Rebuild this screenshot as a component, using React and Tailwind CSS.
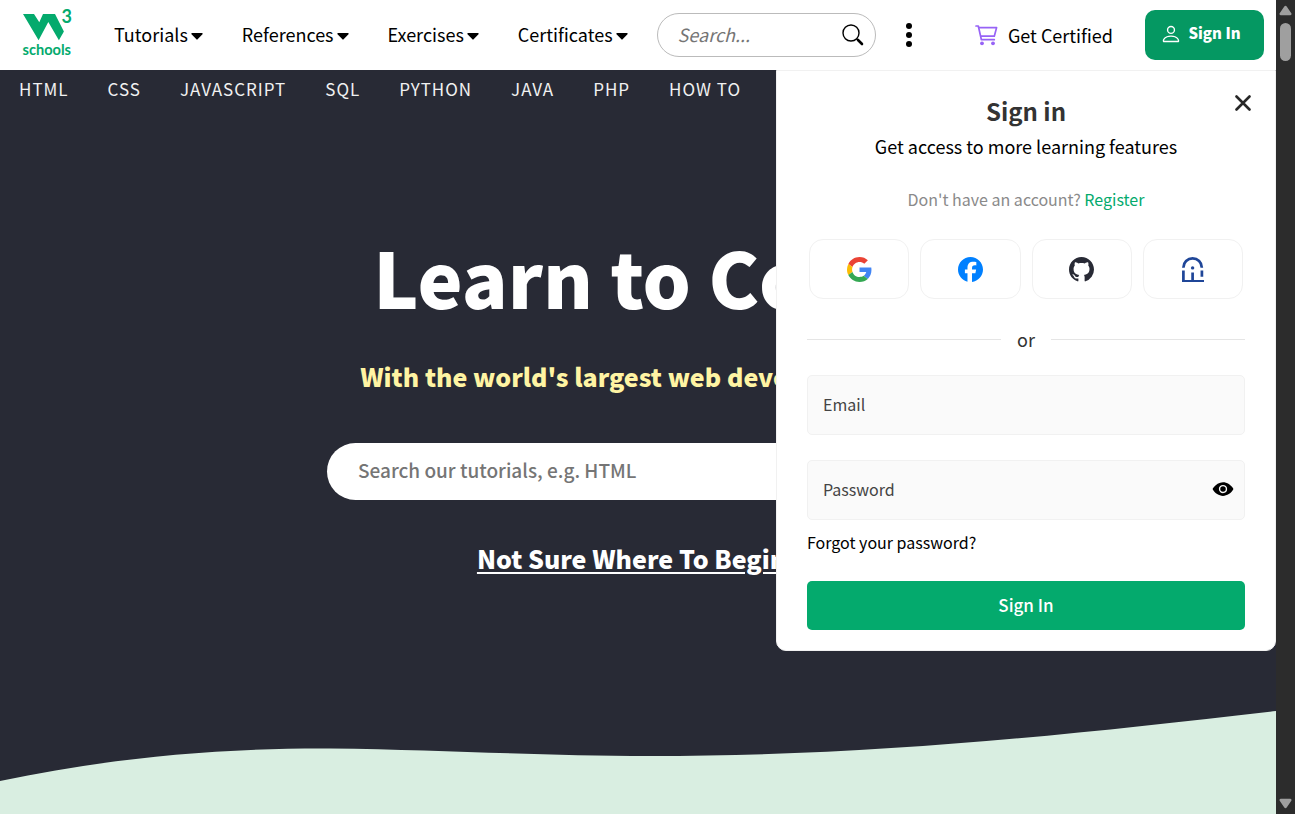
import React from "react";
import { FaFacebook } from "react-icons/fa6";
import { BsGithub, BsPerson } from "react-icons/bs";
import { IoEye } from "react-icons/io5";

const MENUS = ["Tutorials", "References", "Exercises", "Certificates"];
const TOPICS = ["HTML", "CSS", "JAVASCRIPT", "SQL", "PYTHON", "JAVA", "PHP", "HOW TO"];

function Logo() {
  return (
    <a href="#home" aria-label="W3Schools home" className="block shrink-0">
      <svg width="54" height="62" viewBox="0 -6 54 62" className="block fill-[#04aa6d]">
        <path d="M2 4h11l5.300 8.300L22 4h12l8.900 17.400-5 8.900-10.600-18.300-9.700 18.300z" />
        <text x="40.5" y="13" fontSize="18" fontWeight="700" fontFamily="Lato, sans-serif">3</text>
        <text x="1.5" y="45" fontSize="14.600" fontWeight="700" fontFamily="Lato, sans-serif">schools</text>
      </svg>
    </a>
  );
}

function Caret() {
  return (
    <svg width="12" height="7" viewBox="0 0 12 7" className="mt-1 block fill-black" aria-hidden="true">
      <path d="M1 0h10a.7.7 0 0 1 .5 1.2L6.6 6.3a.8.8 0 0 1-1.2 0L.5 1.2A.7.7 0 0 1 1 0z" />
    </svg>
  );
}

function SearchIcon() {
  return (
    <svg width="22" height="22" viewBox="0 0 22 22" fill="none" className="block stroke-black" aria-hidden="true">
      <circle cx="9" cy="9" r="8" strokeWidth="1.4" />
      <path d="M14.6 14.8l1.6 1.6" strokeWidth="1.4" />
      <path d="M16 16l4 4" strokeWidth="2.6" strokeLinecap="round" />
    </svg>
  );
}

function CartIcon() {
  return (
    <svg width="23" height="21" viewBox="0 0 23 21" fill="none" strokeWidth="1.7" strokeLinecap="round" strokeLinejoin="round" className="block stroke-[#9763f6]" aria-hidden="true">
      <path d="M1 1h2.300l3.100 13.700H19.300" />
      <path d="M3.700 2.600H21.600L19.300 11.200H5.800" />
      <circle cx="7" cy="18.300" r="1.900" className="fill-[#9763f6] stroke-none" />
      <circle cx="18" cy="18.300" r="1.900" className="fill-[#9763f6] stroke-none" />
    </svg>
  );
}

function GoogleIcon() {
  return (
    <svg width="25" height="25" viewBox="0 0 48 48" className="block" aria-hidden="true">
      <path fill="#EA4335" d="M24 9.5c3.54 0 6.71 1.22 9.21 3.6l6.85-6.85C35.9 2.38 30.47 0 24 0 14.62 0 6.51 5.38 2.56 13.22l7.98 6.19C12.43 13.72 17.74 9.5 24 9.5z" />
      <path fill="#4285F4" d="M46.98 24.55c0-1.57-.15-3.09-.38-4.55H24v9.02h12.94c-.58 2.96-2.26 5.48-4.78 7.18l7.73 6c4.51-4.18 7.09-10.36 7.09-17.65z" />
      <path fill="#FBBC05" d="M10.53 28.59c-.48-1.45-.76-2.99-.76-4.59s.27-3.14.76-4.59l-7.98-6.19C.92 16.46 0 20.12 0 24c0 3.88.92 7.54 2.56 10.78l7.97-6.19z" />
      <path fill="#34A853" d="M24 48c6.48 0 11.93-2.13 15.89-5.81l-7.73-6c-2.15 1.45-4.92 2.3-8.16 2.3-6.26 0-11.57-4.22-13.47-9.91l-7.98 6.19C6.51 42.62 14.62 48 24 48z" />
    </svg>
  );
}

function ArchIcon() {
  return (
    <svg width="22" height="25" viewBox="0 0 22 25" fill="none" className="block stroke-[#1f4698]" aria-hidden="true">
      <path d="M1.400 10.800V10.400a9.200 9 0 0 1 18.400 0v.4" strokeWidth="2.700" />
      <path d="M1.400 13.500V25M10.600 15.500V24M19.900 13.500v6.300" strokeWidth="2.700" />
      <path d="M0 24h22" strokeWidth="2" />
      <circle cx="10.600" cy="10.900" r="1.700" className="fill-[#1f4698] stroke-none" />
    </svg>
  );
}

function Header() {
  return (
    <header className="flex h-[70px] shrink-0 items-center bg-white pl-[21px] pr-3">
      <Logo />
      <nav className="ml-[39px] flex items-center gap-[39px] pb-0.5">
        {MENUS.map((m) => (
          <a key={m} href={"#" + m.toLowerCase()} className="flex items-center gap-[3px] text-[18px] leading-6 text-black">
            {m}
            <Caret />
          </a>
        ))}
      </nav>
      <div className="ml-[29px] flex h-11 w-[219px] shrink-0 items-center rounded-full border border-[#bbb] pl-5 pr-[11px]">
        <input
          type="text"
          aria-label="Search"
          placeholder="Search..."
          className="min-w-0 flex-1 bg-transparent pb-0.5 text-[18px] leading-6 outline-none placeholder:italic placeholder:text-[#757575]"
        />
        <button type="button" aria-label="Submit search">
          <SearchIcon />
        </button>
      </div>
      <button type="button" aria-label="More" className="ml-[30px] flex flex-col gap-[3px]">
        <span className="block size-1.5 rounded-full bg-black" />
        <span className="block size-1.5 rounded-full bg-black" />
        <span className="block size-1.5 rounded-full bg-black" />
      </button>
      <a href="#certified" className="ml-auto flex items-center gap-2.5 whitespace-nowrap text-[18px] leading-6 text-black">
        <CartIcon />
        Get Certified
      </a>
      <button
        type="button"
        className="ml-8 flex h-[50px] w-[119px] shrink-0 items-center justify-center gap-1.5 rounded-[10px] bg-[#059862] pr-2 pb-[3px] text-[15px] font-black text-white"
      >
        <BsPerson className="size-[22px]" />
        Sign In
      </button>
    </header>
  );
}

function Hero() {
  return (
    <main className="flex min-h-0 flex-1 flex-col bg-[#282a35]">
      <nav className="flex h-10 items-center gap-[39px] pb-0.5 pl-[19px]">
        {TOPICS.map((t) => (
          <a key={t} href={"#" + t.toLowerCase()} className="whitespace-nowrap text-[17px] leading-6 tracking-[1px] text-[#f1f1f1]">
            {t}
          </a>
        ))}
      </nav>
      <section className="flex flex-1 flex-col items-center pt-[110px] text-center">
        <h1 className="text-[76px] leading-[112px] font-black text-white">Learn to Code</h1>
        <p className="mt-[26px] text-[25px] leading-9 font-black text-[#fff4a3]">With the world's largest web developer site.</p>
        <input
          type="text"
          aria-label="Search our tutorials"
          placeholder="Search our tutorials, e.g. HTML"
          className="mt-[49px] h-[57px] w-[622px] max-w-full rounded-full bg-white px-[31px] pb-1 text-[19px] font-medium outline-none placeholder:text-[#757575]"
        />
        <a href="#start" className="mt-10 text-[25px] leading-9 font-black text-white underline decoration-2 underline-offset-3">
          Not Sure Where To Begin?
        </a>
      </section>
      <svg viewBox="0 0 1276 104" preserveAspectRatio="none" className="block h-[104px] w-full shrink-0 fill-[#d9eee1]" aria-hidden="true">
        <path d="M0 71C110 48 215 38 330 38.500C450 40 540 46 650 46C870 46 1060 26 1276 1V104H0z" />
      </svg>
    </main>
  );
}

function SignInPanel() {
  const social = "flex h-[60px] items-center justify-center rounded-[14px] border border-[#f1f1f1] bg-white";
  const field =
    "h-[60px] w-full rounded-[5px] border border-[#f1f1f1] bg-[#fafafa] px-[15px] pb-0.5 text-[16px] text-black outline-none placeholder:text-[#444]";
  return (
    <section
      aria-label="Sign in"
      className="absolute top-[70px] right-0 w-[500px] rounded-b-[10px] border border-[#f1f1f1] bg-white px-[30px] pt-6 pb-5 text-center"
    >
      <button type="button" aria-label="Close" className="absolute top-6 right-6 text-[#282828]">
        <svg width="16" height="16" viewBox="0 0 16 16" fill="none" stroke="currentColor" strokeWidth="2.6" strokeLinecap="round" className="block">
          <path d="M1.500 1.500l13 13M14.500 1.500l-13 13" />
        </svg>
      </button>
      <h2 className="text-[24px] leading-8 font-bold text-[#333]">Sign in</h2>
      <p className="mt-px text-[18px] leading-9 text-black">Get access to more learning features</p>
      <p className="mt-[23px] text-[16px] leading-6 text-[#8a8a8a]">
        Don't have an account?{" "}
        <a href="#register" className="text-[#04aa6d]">
          Register
        </a>
      </p>
      <div className="mt-7 grid grid-cols-4 gap-[11px] px-0.5">
        <button type="button" aria-label="Google" className={social}>
          <GoogleIcon />
        </button>
        <button type="button" aria-label="Facebook" className={social}>
          <FaFacebook className="size-[25px] text-[#0080ff]" />
        </button>
        <button type="button" aria-label="GitHub" className={social}>
          <BsGithub className="size-[25px] text-[#282a35]" />
        </button>
        <button type="button" aria-label="School account" className={social}>
          <ArchIcon />
        </button>
      </div>
      <div className="mt-7 flex items-center gap-4">
        <span className="h-px flex-1 bg-[#e5e5e5]" />
        <span className="text-[18px] leading-6 text-[#333]">or</span>
        <span className="h-px flex-1 bg-[#e5e5e5]" />
      </div>
      <form className="mt-6 text-left">
        <input type="email" aria-label="Email" placeholder="Email" className={field} />
        <div className="relative mt-[25px]">
          <input type="password" aria-label="Password" placeholder="Password" className={field} />
          <button type="button" aria-label="Show password" className="absolute top-[18px] right-[11px]">
            <IoEye className="size-[22px] text-black" />
          </button>
        </div>
        <a href="#forgot" className="mt-[10px] block text-[16px] leading-6 text-black">
          Forgot your password?
        </a>
        <button type="submit" className="mt-[27px] h-[49px] w-full rounded-[5px] bg-[#04aa6d] pb-0.5 text-[17px] font-medium text-white">
          Sign In
        </button>
      </form>
    </section>
  );
}

function ScrollRail() {
  return (
    <div className="flex w-[19px] shrink-0 flex-col items-center bg-[#2c2c2c] py-[5px]" aria-hidden="true">
      <svg width="13" height="11" viewBox="0 0 13 11" className="block fill-[#9f9f9f]">
        <path d="M5.300 1.500a1.500 1.500 0 0 1 2.400 0l4.600 6.800a1.200 1.200 0 0 1-1 1.900H1.700a1.200 1.200 0 0 1-1-1.900z" />
      </svg>
      <span className="mt-[7px] block h-[38px] w-[11px] rounded-full bg-[#9f9f9f]" />
      <svg width="13" height="11" viewBox="0 0 13 11" className="mt-auto block fill-[#9f9f9f]">
        <path d="M5.300 9.500a1.500 1.500 0 0 0 2.400 0l4.600-6.800a1.200 1.200 0 0 0-1-1.900H1.700a1.200 1.200 0 0 0-1 1.900z" />
      </svg>
    </div>
  );
}

export default function App() {
  return (
    <div className="flex h-screen overflow-hidden font-['Noto_Sans_CJK_SC','Open_Sans',sans-serif]">
      <div className="relative flex min-w-0 flex-1 flex-col">
        <Header />
        <Hero />
        <SignInPanel />
      </div>
      <ScrollRail />
    </div>
  );
}
